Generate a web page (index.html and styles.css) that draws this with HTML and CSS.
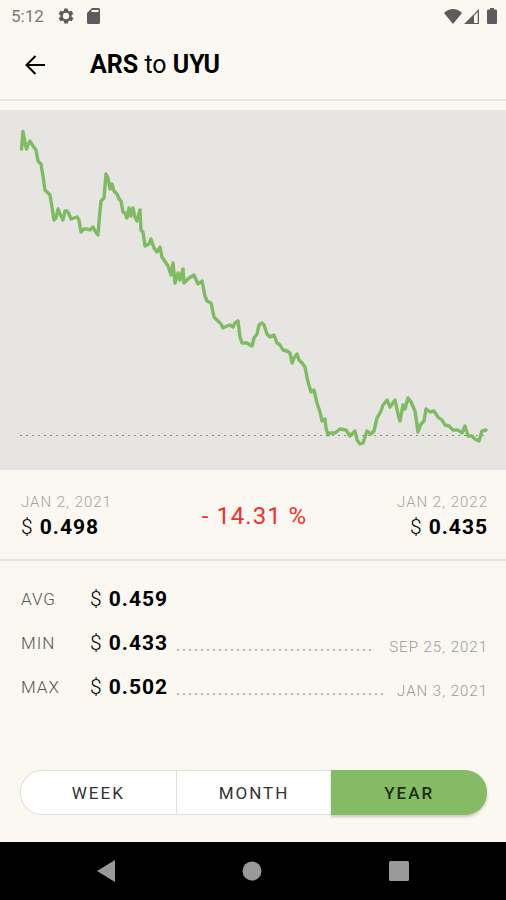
FILE: index.html
```html
<!DOCTYPE html>
<html lang="en">
<head>
    <meta charset="utf-8">
    <title>ARS to UYU</title>
    <meta name="viewport" content="width=device-width, initial-scale=1">
    <link rel="stylesheet" href="styles.css">
</head>
<body>

<div class="statusbar">
  <span class="time">5:12</span>
  <svg class="gear" width="18" height="18" viewBox="0 0 24 24"><path d="M19.4 13a7.5 7.5 0 0 0 0-2l2.1-1.6a.5.5 0 0 0 .1-.6l-2-3.5a.5.5 0 0 0-.6-.2l-2.500 1a7.300 7.300 0 0 0-1.700-1l-.4-2.600a.5.5 0 0 0-.5-.4h-4a.5.5 0 0 0-.5.4L9.200 5.100c-.6.3-1.200.6-1.700 1L5 5.100a.5.5 0 0 0-.6.2l-2 3.500c-.1.200-.1.500.1.600L4.600 11a7.500 7.500 0 0 0 0 2l-2.100 1.600a.5.5 0 0 0-.1.600l2 3.500c.1.200.4.300.6.200l2.500-1c.5.400 1.100.7 1.700 1l.4 2.600c0 .2.200.4.500.4h4c.3 0 .5-.2.500-.4l.4-2.600c.6-.3 1.200-.6 1.700-1l2.500 1c.2.100.5 0 .6-.2l2-3.500a.5.500 0 0 0-.1-.6zM12 16.200a4.200 4.200 0 1 1 0-8.400 4.200 4.200 0 0 1 0 8.400z"/></svg>
  <svg class="card" width="13" height="16" viewBox="0 0 13 16"><path fill-rule="evenodd" d="M5 0h6.500Q13 0 13 1.500v13q0 1.500-1.500 1.500h-10Q0 16 0 14.500V5zM4.500 2v2h7V2z"/></svg>
  <svg class="wifi" width="18" height="15" viewBox="0 0 18 15"><path d="M9 15 0 4Q4 0 9 0t9 4z"/></svg>
  <svg class="signal" width="15" height="15" viewBox="0 0 15 15"><path fill-rule="evenodd" d="M0 15 15 0v15zM10 6.800V14h3.700V3z"/></svg>
  <svg class="battery" width="10" height="16" viewBox="0 0 10 16"><path d="M3 0h4v1.500h2q1 0 1 1V15q0 1-1 1H1q-1 0-1-1V2.500q0-1 1-1h2z"/></svg>
</div>

<header>
  <button class="back" aria-label="Back">
    <svg width="20" height="20" viewBox="0 0 20 20"><path d="M20 10H1.500M10.500 1 1.500 10l9 9"/></svg>
  </button>
  <h1>ARS <span>to</span> UYU</h1>
</header>

<main>
  <div class="chart">
    <svg viewBox="0 0 506 360" role="img" aria-label="ARS to UYU, last year">
      <line class="current" x1="20" y1="325.5" x2="487" y2="325.5"/>
      <polyline class="rate" stroke-width="3.4" points="21.5,39 23,21.5 25,33 26.5,39 28,35 30,31 33,36 36,40 38,51 41,54 43,66 45,80 47,82 50,85 52,97 54,110 56,108 58,99 60,104 63,110 65,101 67,101 69,104 71,109 74,108 77,107 79,110 81,122 84,119 87,119 90,120 93,117 95,121 98,125 99,112 101,91 104,88 106,64 108,68 110,79 112,74 114,81 117,84 119,89 121,91 123,102 125,103 127,108 129,98 131,106 133,98 135,107 137,111 140,100 141,120 143,122 145,136 149,134 151,129 154,138 157,142 160,137 162,147 166,153 168,156 171,165 173,153 175,173 178,163 180,170 183,159 184,173 189,168 194,165 198,174 202,171 205,186 207,191 211,193 214,207 218,211 221,214 223,218 227,216 230,215 233,217 235,213 238,211 240,227 242,233 247,233 250,235 252,236 254,228 257,224 259,215 262,213 264,215 267,224 270,227 274,225 277,233 280,235 283,240 287,241 290,243 292,253 294,248 297,244 299,250 302,253 305,257 308,272 311,282 314,280 317,293 320,302 322,311 325,309 326,318 328,325 330,323 335,323 340,319 346,320 350,326 355,321 357,330 360,334 363,333 367,321 371,324 374,321 377,308 381,301 383,295 387,290 390,297 395,290 398,304 400,311 403,295 405,299 408,288 411,292 415,301 418,322 421,314 424,311 426,299 430,302 434,301 438,307 442,310 445,315 449,316 453,320 458,320 462,323 465,316 468,326 472,326 475,329 479,331 482,321 486,320"/>
    </svg>
  </div>

  <section class="summary">
    <div class="from">
      <div class="date">JAN 2, 2021</div>
      <div class="price">$ <b>0.498</b></div>
    </div>
    <div class="change">- 14.31 %</div>
    <div class="to">
      <div class="date">JAN 2, 2022</div>
      <div class="price">$ <b>0.435</b></div>
    </div>
  </section>

  <section class="stats">
    <div class="row">
      <span class="label">AVG</span>
      <span class="price">$ <b>0.459</b></span>
    </div>
    <div class="row">
      <span class="label">MIN</span>
      <span class="price">$ <b>0.433</b></span>
      <span class="dots"></span>
      <span class="date">SEP 25, 2021</span>
    </div>
    <div class="row">
      <span class="label">MAX</span>
      <span class="price">$ <b>0.502</b></span>
      <span class="dots"></span>
      <span class="date">JAN 3, 2021</span>
    </div>
  </section>
</main>

<div class="period">
  <button>WEEK</button>
  <button>MONTH</button>
  <button class="active">YEAR</button>
</div>

<nav>
  <button aria-label="Back"><svg width="18" height="22" viewBox="0 0 18 22"><path d="M18 0v22L0 11z"/></svg></button>
  <button aria-label="Home"><svg width="20" height="20" viewBox="0 0 20 20"><circle cx="10" cy="10" r="9.5"/></svg></button>
  <button aria-label="Recent apps"><svg width="20" height="20" viewBox="0 0 20 20"><rect width="20" height="20" rx="1.5"/></svg></button>
</nav>

</body>
</html>
```

FILE: styles.css
```css
* {
	box-sizing: border-box;
}

body {
	margin: 0;
	min-height: 100vh;
	display: flex;
	flex-direction: column;
	background: #fbf8f1;
	color: #000;
	font-family: Roboto, "Liberation Sans", sans-serif;
}

button {
	border: 0;
	padding: 0;
	background: none;
	font-family: inherit;
	cursor: pointer;
}

svg {
	display: block;
}

.statusbar {
	display: flex;
	align-items: center;
	height: 32px;
	padding: 0 9px 0 11px;
	color: #777;
	font-size: 17px;
}

.statusbar svg {
	fill: #5c5c5c;
}

.gear {
	margin-left: 13px;
}

.card {
	margin-left: 12px;
}

.wifi {
	margin-left: auto;
}

.signal {
	margin-left: 2px;
}

.battery {
	margin-left: 8px;
}

header {
	display: flex;
	align-items: center;
	height: 69px;
	padding: 0 25px 2px;
	border-bottom: 2px solid #e6e4df;
}

.back {
	margin-right: 45px;
}

.back svg {
	fill: none;
	stroke: #000;
	stroke-width: 2;
}

h1 {
	margin: 0;
	font-size: 25px;
	font-weight: 700;
}

h1 span {
	font-weight: 400;
}

.chart {
	margin-top: 9px;
	background: #e6e5e1;
}

.chart svg {
	width: 100%;
	height: auto;
}

.current {
	stroke: #8f8e8b;
	stroke-width: 1;
	stroke-dasharray: 2 4;
}

.rate {
	fill: none;
	stroke: #7fbb62;
	stroke-linejoin: round;
	stroke-linecap: round;
}

.summary {
	display: flex;
	justify-content: space-between;
	align-items: center;
	height: 91px;
	padding: 2px 18px 0 21px;
	border-bottom: 2px solid #e6e4df;
}

.date {
	color: #a5a39f;
	font-size: 15px;
	font-weight: 300;
	line-height: 22px;
	letter-spacing: 1px;
}

.price {
	font-size: 21px;
	line-height: 28px;
	letter-spacing: 1px;
	font-weight: 300;
}

.price b {
	font-weight: 700;
}

.to {
	text-align: right;
}

.change {
	color: #f22f2f;
	font-size: 24px;
	letter-spacing: 1px;
}

.stats {
	padding: 16px 18px 0 21px;
}

.row {
	display: flex;
	align-items: center;
	height: 44px;
}

.label {
	width: 69px;
	color: #555;
	font-size: 17px;
	font-weight: 300;
	letter-spacing: 1px;
}

.dots {
	flex: 1;
	height: 2px;
	margin: 14px 14px 0 9px;
	background: repeating-linear-gradient(90deg, #b9b7b2 0 2px, transparent 2px 6px);
}

.row .date {
	color: #999;
	margin-top: 8px;
}

.period {
	display: grid;
	grid-template-columns: repeat(3, 1fr);
	height: 45px;
	margin: auto 19px 27px 20px;
}

.period button {
	border: 1px solid #e2e0db;
	border-right: 0;
	background: #fff;
	color: #333;
	font-size: 17px;
	letter-spacing: 2px;
}

.period button:first-child {
	border-radius: 22px 0 0 22px;
}

.period .active {
	border: 0;
	border-radius: 0 22px 22px 0;
	background: #86bb66;
	color: #1c2b14;
	font-weight: 500;
	box-shadow: 0 2px 3px rgba(0, 0, 0, 0.2);
}

nav {
	display: flex;
	justify-content: space-between;
	align-items: center;
	height: 58px;
	padding: 0 97px;
	background: #000;
}

nav svg {
	fill: #999;
}
```
